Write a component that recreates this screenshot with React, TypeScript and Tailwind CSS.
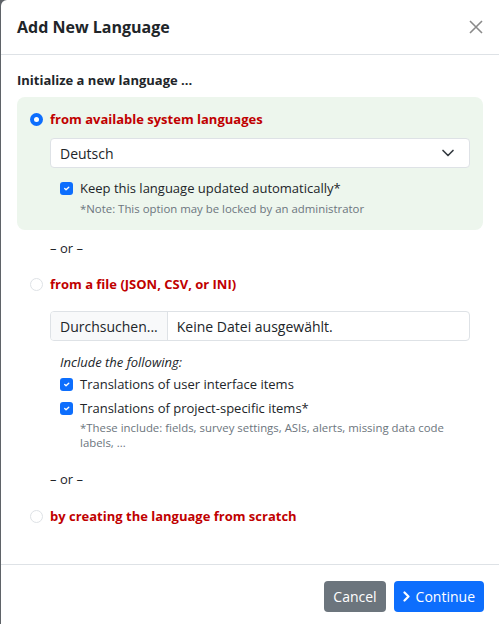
import React from "react";

function Radio({ checked }: { checked?: boolean }) {
  if (checked) {
    return (
      <span className="w-[13px] h-[13px] rounded-full bg-[#0d6efd] flex items-center justify-center shrink-0">
        <span className="w-[5px] h-[5px] rounded-full bg-white" />
      </span>
    );
  }
  return <span className="w-[13px] h-[13px] rounded-full border border-[#dee2e6] bg-white shrink-0" />;
}

function Check() {
  return (
    <span className="w-[13px] h-[13px] rounded-[3px] bg-[#0d6efd] flex items-center justify-center shrink-0">
      <svg width="9" height="9" viewBox="0 0 20 20">
        <path d="m6 10 3 3 6-6" fill="none" stroke="#fff" strokeWidth="3" strokeLinecap="round" strokeLinejoin="round" />
      </svg>
    </span>
  );
}

export default function App() {
  return (
    <div className="w-[499px] h-[624px] overflow-hidden bg-[#5f6368] flex" style={{ fontFamily: '"Open Sans", sans-serif' }}>
      <div className="ml-px w-[498px] bg-white rounded-tl-[6px] text-[#212529] flex flex-col">
        <div className="h-[55px] shrink-0 pl-[16px] pr-[16px] flex items-center justify-between border-b border-[#dee2e6]">
          <h5 className="text-[16px] font-bold leading-[24px] -mt-[1px]">Add New Language</h5>
          <svg width="14" height="14" viewBox="0 0 14 14">
            <path d="M1 1 13 13M13 1 1 13" stroke="#8a8a8a" strokeWidth="1.6" />
          </svg>
        </div>

        <div className="px-[16px] pt-[15px] pb-[37px] border-b border-[#dee2e6]">
          <div className="text-[13px] font-bold leading-[21px]">Initialize a new language ...</div>

          <div className="mt-[6px] bg-[#edf6ed] rounded-[8px] pl-[13px] pr-[13px] pt-[12px] pb-[13px]">
            <div className="flex items-center gap-[7px] leading-[21px]">
              <Radio checked />
              <span className="text-[13px] font-bold text-[#c00000]">from available system languages</span>
            </div>
            <div className="ml-[20px] mt-[8px] h-[30px] bg-white border border-[#dee2e6] rounded-[4px] flex items-center justify-between pl-[9px] pr-[14px]">
              <span className="text-[14px]">Deutsch</span>
              <svg width="14" height="10" viewBox="0 0 16 12">
                <path d="m2 3 6 6 6-6" fill="none" stroke="#343a40" strokeWidth="2" strokeLinecap="round" strokeLinejoin="round" />
              </svg>
            </div>
            <div className="ml-[30px] mt-[10px] flex items-center gap-[7px] leading-[20px]">
              <Check />
              <span className="text-[13px]">Keep this language updated automatically*</span>
            </div>
            <div className="ml-[50px] text-[11.4px] leading-[16px] text-[#6c757d] mt-[3px]">
              *Note: This option may be locked by an administrator
            </div>
          </div>

          <div className="ml-[33px] mt-[10px] text-[13px] leading-[16px]">– or –</div>

          <div className="ml-[13px] mt-[18px] flex items-center gap-[7px] leading-[21px]">
            <Radio />
            <span className="text-[13px] font-bold text-[#c00000]">from a file (JSON, CSV, or INI)</span>
          </div>

          <div className="ml-[33px] mr-[13px] mt-[16px] h-[30px] border border-[#dee2e6] rounded-[4px] flex items-stretch overflow-hidden">
            <div className="bg-[#f8f9fa] border-r border-[#dee2e6] px-[9px] flex items-center text-[14px]">Durchsuchen...</div>
            <div className="px-[9px] flex items-center text-[14px]">Keine Datei ausgewählt.</div>
          </div>

          <div className="ml-[43px] mt-[11px] text-[13px] italic leading-[20px]">Include the following:</div>
          <div className="ml-[43px] mt-[2px] flex items-center gap-[7px] leading-[20px]">
            <Check />
            <span className="text-[13px]">Translations of user interface items</span>
          </div>
          <div className="ml-[43px] mt-[4px] flex items-center gap-[7px] leading-[20px]">
            <Check />
            <span className="text-[13px]">Translations of project-specific items*</span>
          </div>
          <div className="ml-[63px] mr-[30px] mt-[2px] text-[11.4px] leading-[15px] text-[#6c757d]">
            *These include: fields, survey settings, ASIs, alerts, missing data code labels, ...
          </div>

          <div className="ml-[33px] mt-[21px] text-[13px] leading-[16px]">– or –</div>

          <div className="ml-[13px] mt-[19px] flex items-center gap-[7px] leading-[21px]">
            <Radio />
            <span className="text-[13px] font-bold text-[#c00000]">by creating the language from scratch</span>
          </div>
        </div>

        <div className="pt-[16px] pr-[15px] flex justify-end gap-[8px]">
          <button className="h-[31px] px-[9px] rounded-[4px] bg-[#6c757d] text-white text-[14px]">Cancel</button>
          <button className="h-[31px] px-[9px] rounded-[4px] bg-[#0d6efd] text-white text-[14px] flex items-center gap-[5px]">
            <svg width="8" height="11" viewBox="0 0 8 11">
              <path d="M1.5 1.5 5.5 5.5 1.5 9.5" fill="none" stroke="#fff" strokeWidth="2.2" strokeLinecap="round" strokeLinejoin="round" />
            </svg>
            Continue
          </button>
        </div>
      </div>
    </div>
  );
}
